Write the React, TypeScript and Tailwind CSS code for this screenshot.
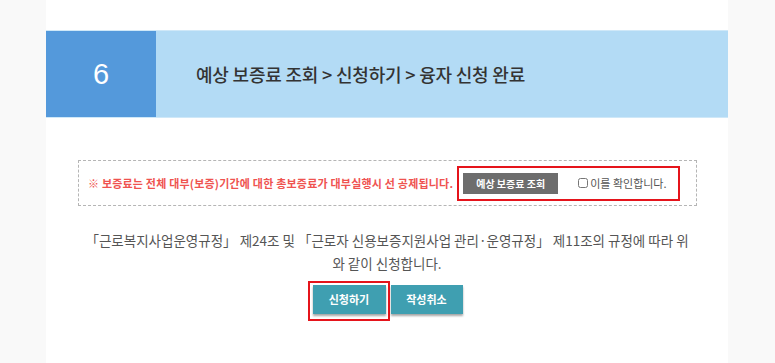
const App = () => (
	<div className="w-[775px] h-[363px] bg-[#f9f9f9] overflow-hidden" style={{ fontFamily: '"Noto Sans CJK KR", "Noto Sans", sans-serif' }}>
		<div className="ml-[46px] w-[682px] h-full bg-white pt-[30px]">
			{/* step header */}
			<div className="flex h-[88px] border-y border-[#cfe8f8]">
				<div className="w-[110px] bg-[#5499db] flex items-center justify-center text-white text-[29px] leading-none" style={{ fontFamily: '"Liberation Sans", Arial, sans-serif' }}>
					6
				</div>
				<div className="flex-1 bg-[#b3dbf5] flex items-center pl-[40px] text-[18px] font-medium text-[#333] tracking-[-0.2px]">
					예상 보증료 조회 &gt; 신청하기 &gt; 융자 신청 완료
				</div>
			</div>

			{/* notice box */}
			<div className="mt-[42px] ml-[32px] w-[619px] h-[46px] border border-dashed border-[#b5b5b5] flex items-center pl-[9px]">
				<span className="text-[11px] font-bold text-[#ef5350] tracking-[0.2px]">
					※ 보증료는 전체 대부(보증)기간에 대한 총보증료가 대부실행시 선 공제됩니다.
				</span>
				<div className="ml-[4px] w-[223px] h-[35px] border-2 border-[#e5141b] flex items-center pl-[4px]">
					<button className="w-[95px] h-[21px] bg-[#6d6d6d] text-white text-[10px] font-bold">
						예상 보증료 조회
					</button>
					<label className="ml-[20px] flex items-center text-[11px] text-[#555]">
						<input type="checkbox" className="w-[10px] h-[10px] mr-[2px]" />
						이를 확인합니다.
					</label>
				</div>
			</div>

			{/* agreement text */}
			<p className="mt-[23px] text-center text-[13.5px] leading-[23px] text-[#555]">
				「근로복지사업운영규정」 제24조 및 「근로자 신용보증지원사업 관리·운영규정」 제11조의 규정에 따라 위
				<br />
				와 같이 신청합니다.
			</p>

			{/* actions */}
			<div className="mt-[6px] flex justify-center items-start ml-[-4px]">
				<div className="border-2 border-[#e5141b] pt-[2px] pl-[3px] pr-[2px] pb-[5px]">
					<button className="w-[73px] h-[29px] bg-[#3f9fb1] text-white text-[11px] font-bold shadow-[0_2px_2px_rgba(0,0,0,0.35)]">
						신청하기
					</button>
				</div>
				<button className="mt-[4px] ml-[1px] w-[72px] h-[29px] bg-[#3f9fb1] text-white text-[11px] font-bold shadow-[0_2px_2px_rgba(0,0,0,0.35)]">
					작성취소
				</button>
			</div>
		</div>
	</div>
);

export default App;
